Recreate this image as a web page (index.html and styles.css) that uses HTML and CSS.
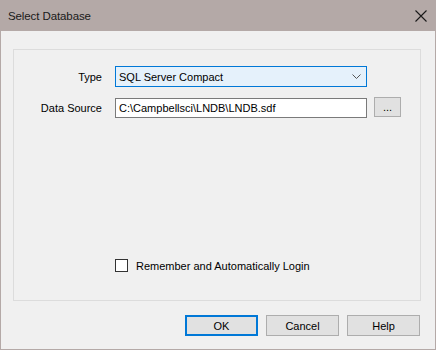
FILE: index.html
```html
<!DOCTYPE html>
<html lang="en">
<head>
    <meta charset="UTF-8">
    <title>Select Database</title>
    <link rel="stylesheet" href="styles.css">
</head>
<body>

<div class="dialog">
    <div class="title-bar">
        <span class="title">Select Database</span>
        <svg class="close" width="12" height="12" viewBox="0 0 12 12">
            <path d="M0.5 0.5 L11.5 11.5 M11.5 0.5 L0.5 11.5" stroke="#1a1a1a" stroke-width="1.1" fill="none"/>
        </svg>
    </div>
    <div class="dialog-body">
        <div class="group-box">
            <div class="form-grid">
                <label class="field-label">Type</label>
                <div class="select">
                    <span>SQL Server Compact</span>
                    <svg class="chevron" width="9" height="5" viewBox="0 0 9 5">
                        <path d="M0.5 0.5 L4.5 4.5 L8.5 0.5" stroke="#555" stroke-width="1" fill="none"/>
                    </svg>
                </div>
                <span></span>

                <label class="field-label">Data Source</label>
                <div class="text-input">C:\Campbellsci\LNDB\LNDB.sdf</div>
                <button class="browse">...</button>
            </div>

            <div class="remember">
                <span class="checkbox"></span>
                <span>Remember and Automatically Login</span>
            </div>
        </div>

        <div class="buttons">
            <button class="btn default">OK</button>
            <button class="btn">Cancel</button>
            <button class="btn">Help</button>
        </div>
    </div>
</div>

</body>
</html>
```

FILE: styles.css
```css
* {
    box-sizing: border-box;
}
body {
    margin: 0;
    padding: 0;
    font-family: 'Liberation Sans', Arial, sans-serif;
    font-size: 11px;
    color: #000;
    background-color: #f0f0f0;
}
.dialog {
    width: 436px;
    height: 350px;
    border: 1px solid #b4a9a7;
    border-top: none;
    background-color: #f0f0f0;
    display: flex;
    flex-direction: column;
}
.title-bar {
    height: 31px;
    background-color: #b4a9a7;
    display: flex;
    align-items: center;
    justify-content: space-between;
    padding: 0 9px 0 8px;
    margin: 0 -1px;
}
.title {
    font-size: 11.5px;
    color: #1a1a1a;
    letter-spacing: -0.1px;
}
.close {
    display: block;
    margin-top: 1px;
}
.dialog-body {
    flex: 1;
    padding: 18px 14px 0 12px;
    display: flex;
    flex-direction: column;
}
.group-box {
    height: 252px;
    border: 1px solid #dcdcdc;
    padding-top: 16px;
    display: flex;
    flex-direction: column;
}
.form-grid {
    display: grid;
    grid-template-columns: 88px 252px 27px;
    column-gap: 13px;
    row-gap: 11px;
    align-items: center;
}
.form-grid .browse {
    margin-left: -6px;
}
.field-label {
    text-align: right;
}
.select {
    height: 21px;
    border: 1px solid #0078d7;
    background-color: #e5f1fb;
    display: flex;
    align-items: center;
    justify-content: space-between;
    padding: 0 5px 0 3px;
}
.chevron {
    display: block;
}
.text-input {
    height: 20px;
    border: 1px solid #7a7a7a;
    background-color: #fff;
    padding: 0 3px;
    line-height: 18px;
}
.browse {
    width: 27px;
    height: 20px;
    margin-top: -2px;
    border: 1px solid #adadad;
    background-color: #e1e1e1;
    font-family: inherit;
    font-size: 11px;
    padding: 0;
    line-height: 18px;
}
.remember {
    margin-top: auto;
    margin-bottom: 28px;
    margin-left: 101px;
    display: flex;
    align-items: center;
    gap: 8px;
}
.checkbox {
    width: 13px;
    height: 13px;
    border: 1px solid #333;
    background-color: #fff;
}
.buttons {
    display: flex;
    justify-content: flex-end;
    gap: 8px;
    margin-top: 14px;
    margin-right: 1px;
}
.btn {
    width: 73px;
    height: 21px;
    border: 1px solid #adadad;
    background-color: #e1e1e1;
    font-family: inherit;
    font-size: 11px;
    padding: 0;
    color: #000;
}
.btn.default {
    border: 2px solid #0078d7;
}
```
